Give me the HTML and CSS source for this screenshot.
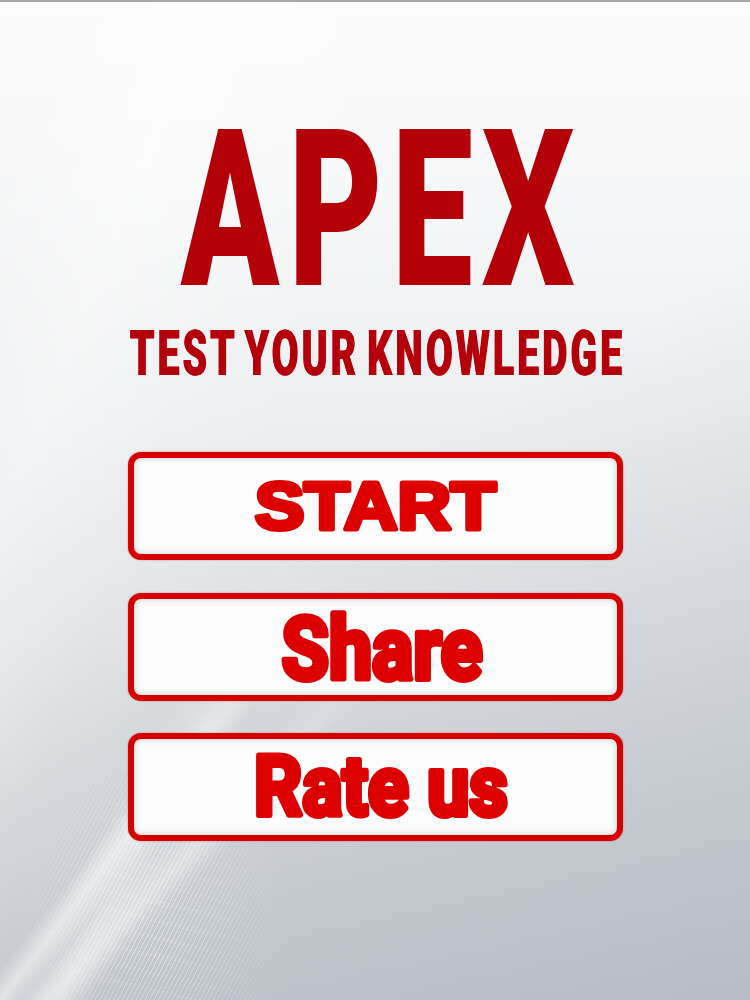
FILE: index.html
```html
<!DOCTYPE html>
<html>
<head>
<meta charset="utf-8">
<link rel="stylesheet" href="styles.css">
</head>
<body>
<div class="screen">
  <div class="glow"></div>
  <div class="streaks"></div>
  <div class="fibers"></div>
  <header class="brand">
    <h1 class="title"><span>APEX</span></h1>
    <p class="subtitle"><span>TEST YOUR KNOWLEDGE</span></p>
  </header>
  <nav class="menu">
    <button class="btn">
      <svg class="label" width="483" height="96" viewBox="0 0 483 96">
        <text class="t-start" x="241.5" y="70.5" text-anchor="middle" textLength="241" lengthAdjust="spacingAndGlyphs">START</text>
      </svg>
    </button>
    <button class="btn">
      <svg class="label" width="483" height="96" viewBox="0 0 483 96">
        <text class="t-cond" x="248" y="79.5" text-anchor="middle" textLength="201" lengthAdjust="spacingAndGlyphs">Share</text>
      </svg>
    </button>
    <button class="btn">
      <svg class="label" width="483" height="96" viewBox="0 0 483 96">
        <text class="t-cond t-rate" x="247" y="76" text-anchor="middle" textLength="254" lengthAdjust="spacingAndGlyphs">Rate us</text>
      </svg>
    </button>
  </nav>
</div>
</body>
</html>
```
FILE: styles.css
```css
html, body {
  margin: 0;
  padding: 0;
}
body {
  width: 750px;
  height: 1000px;
  overflow: hidden;
  font-family: Roboto, "Liberation Sans", Arial, sans-serif;
}
.screen {
  position: relative;
  width: 750px;
  height: 1000px;
  box-sizing: border-box;
  border-top: 2px solid #a9a9a9;
  background:
    linear-gradient(150deg, rgba(255,255,255,0) 48%, rgba(160,170,182,0.45) 100%),
    linear-gradient(to bottom, #fbfbfc 0%, #f6f7f8 20%, #eceef0 42%, #e0e2e5 62%, #d3d6da 82%, #c8ccd1 100%);
  display: flex;
  flex-direction: column;
  align-items: center;
  overflow: hidden;
}
.glow {
  position: absolute;
  inset: 0;
  pointer-events: none;
  background:
    linear-gradient(112deg, rgba(255,255,255,0) 6%, rgba(255,255,255,0.4) 18%, rgba(255,255,255,0.12) 30%, rgba(255,255,255,0) 40%);
}
.streaks {
  position: absolute;
  inset: 0;
  pointer-events: none;
  background:
    linear-gradient(128deg, rgba(255,255,255,0) 49.3%, rgba(255,255,255,0.5) 51%, rgba(255,255,255,0) 52.7%),
    linear-gradient(118deg, rgba(255,255,255,0) 42%, rgba(255,255,255,0.35) 46%, rgba(255,255,255,0) 49%),
    linear-gradient(134deg, rgba(255,255,255,0) 57%, rgba(255,255,255,0.4) 59%, rgba(255,255,255,0) 61%);
  -webkit-mask-image: radial-gradient(ellipse 430px 520px at 15% 100%, #000 35%, transparent 100%);
  mask-image: radial-gradient(ellipse 430px 520px at 15% 100%, #000 35%, transparent 100%);
}
.fibers {
  position: absolute;
  inset: 0;
  pointer-events: none;
  background: repeating-linear-gradient(118deg, rgba(255,255,255,0.45) 0 1px, rgba(255,255,255,0) 1px 4px);
  -webkit-mask-image: radial-gradient(ellipse 140px 210px at 20% 92%, #000 15%, transparent 100%);
  mask-image: radial-gradient(ellipse 140px 210px at 20% 92%, #000 15%, transparent 100%);
}
.brand {
  position: relative;
  display: flex;
  flex-direction: column;
  align-items: center;
}
.title {
  margin: 99px 0 0 0;
  height: 218px;
  font-size: 219px;
  line-height: 218px;
  font-weight: 900;
  color: #b40007;
  white-space: nowrap;
}
.title span {
  display: inline-block;
  letter-spacing: 14px;
  margin-right: -14px;
  transform: scaleX(0.66);
}
.subtitle {
  margin: 4px 0 0 0;
  height: 61px;
  font-size: 63px;
  line-height: 61px;
  font-weight: 900;
  color: #b3000a;
  white-space: nowrap;
}
.subtitle span {
  display: inline-block;
  letter-spacing: 5px;
  margin-right: -5px;
  word-spacing: -8px;
  transform: scaleX(0.62);
  text-shadow: 0.6px 0 0 #b3000a, -0.6px 0 0 #b3000a;
}
.menu {
  position: relative;
  margin-top: 68px;
  display: flex;
  flex-direction: column;
  gap: 32.5px;
}
.btn {
  width: 495px;
  height: 108px;
  box-sizing: border-box;
  border: 6px solid #d70000;
  border-radius: 13px;
  background: #fdfdfd;
  box-shadow: inset 0 0 7px rgba(120,140,130,0.4), 0 0 2px rgba(120,0,0,0.4);
  display: flex;
  align-items: center;
  justify-content: center;
  padding: 0;
}
.label {
  display: block;
  overflow: visible;
}
.label text {
  fill: #dc0000;
  stroke: #dc0000;
  stroke-linejoin: round;
  paint-order: stroke;
  font-weight: 700;
}
.t-start {
  font-family: "Liberation Sans", Arial, sans-serif;
  font-size: 67px;
  stroke-width: 5px;
}
.t-cond {
  font-family: Roboto, "Liberation Sans", Arial, sans-serif;
  font-size: 86.5px;
  stroke-width: 6px;
}
.t-rate {
  font-size: 84px;
}
```
